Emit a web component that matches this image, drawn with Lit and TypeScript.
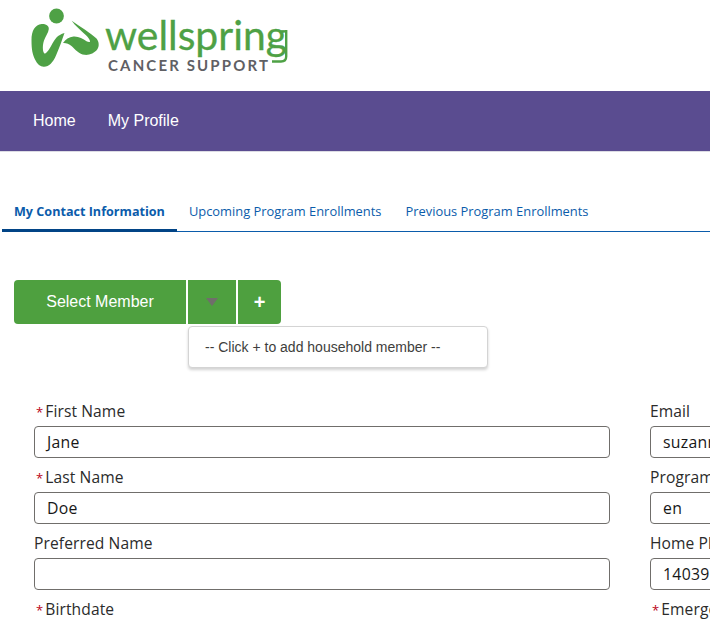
import { LitElement, html, css, svg } from "lit";
import { customElement } from "lit/decorators.js";

const LEFT_FIELDS = [
  { label: "First Name", value: "Jane", required: true },
  { label: "Last Name", value: "Doe", required: true },
  { label: "Preferred Name", value: "", required: false },
  { label: "Birthdate", value: "", required: true },
];

const RIGHT_FIELDS = [
  { label: "Email", value: "suzanne.smith@example.com", required: false },
  { label: "Program Language", value: "en", required: false },
  { label: "Home Phone", value: "14039550100", required: false },
  { label: "Emergency Contact", value: "", required: true },
];

const logo = svg`
  <circle cx="56.5" cy="16" r="7.4" fill="#4ea145"></circle>
  <path fill="#4ea145" d="M41.7 24C35 24.5 31.5 31 31.5 40C31.5 50 32.5 54 35 59.5C37.5 64.5 40.5 67 44 66.8C49 66.5 53 62.5 56 55.5C59.5 47.5 62 40 64.5 33C61 34 58.5 35.5 56.5 37.5C53.5 41 51.5 45.5 49 49.5C47 52.5 45 54.5 44 53C42.5 50.5 42.5 45 44 40.5C45.5 36.5 48.5 32.5 48.8 29C49 25.5 45.5 23.8 41.7 24Z"></path>
  <path fill="#4ea145" d="M71.7 20.7C79 26 91 33 96.5 38.5C99 41.5 99.5 46 97.5 49C94.5 53.5 89 55.3 84.5 54.8C79.5 54.2 75 49.5 71.5 46C69 43.7 66 42.8 63 43C65.5 39.5 69 37 73.5 36.6C78.5 36.2 83 39 86.5 41.2C88 42.1 90 42.4 90 41.4C90 39.8 88 37.3 86 35.3C81 30.5 75 25.5 71.7 20.7Z"></path>
  <text class="logo-word" x="105" y="50" textLength="182" lengthAdjust="spacingAndGlyphs">wellspring</text>
  <path fill="none" stroke="#4ea145" stroke-width="2.4" d="M272 61.5H281C284.5 61.5 286.2 60 286.2 56.5V30"></path>
  <text class="logo-sub" x="108" y="71" textLength="160" lengthAdjust="spacing">CANCER SUPPORT</text>
`;

@customElement("app-root")
export class AppRoot extends LitElement {
  static styles = css`
    :host {
      display: block;
      width: 710px;
      height: 621px;
      overflow: hidden;
      background: #fff;
      font-family: "Open Sans", "Liberation Sans", sans-serif;
      color: #181818;
    }

    .logo-bar {
      height: 91px;
    }

    .logo {
      display: block;
    }

    .logo-word {
      font-family: "Lato", sans-serif;
      font-size: 40px;
      font-weight: 400;
      fill: #4ea145;
      stroke: #4ea145;
      stroke-width: 0.3px;
    }

    .logo-sub {
      font-family: "Lato", sans-serif;
      font-size: 15px;
      font-weight: 700;
      fill: #5f6064;
    }

    .nav {
      height: 60px;
      background: #5a4c90;
      border-bottom: 1px solid #dcdce4;
      box-sizing: content-box;
      display: flex;
      align-items: center;
      gap: 32px;
      padding-left: 33px;
      font-family: "Liberation Sans", sans-serif;
      font-size: 16px;
      color: #fff;
    }

    .tabs {
      margin-top: 43px;
      height: 36px;
      display: flex;
      margin-left: 2px;
      border-bottom: 1px solid #0b5cab;
      font-size: 12.9px;
      color: #0b5cab;
    }

    .tab {
      padding: 0 12px;
      line-height: 33px;
      white-space: nowrap;
    }

    .tab.active {
      font-weight: 700;
      font-size: 12.6px;
      color: #0b5cab;
      box-shadow: inset 0 -3px 0 #014486;
      margin-bottom: -1px;
    }

    .member {
      position: relative;
      margin: 48px 0 0 14px;
      display: flex;
      gap: 2px;
      height: 44px;
      font-family: "Liberation Sans", sans-serif;
    }

    .btn {
      background: #4ea03f;
      color: #fff;
      display: flex;
      align-items: center;
      justify-content: center;
    }

    .btn.select {
      width: 172px;
      font-size: 16px;
      border-radius: 4px 0 0 4px;
    }

    .btn.caret {
      width: 48px;
    }

    .caret-shape {
      width: 0;
      height: 0;
      border-left: 6px solid transparent;
      border-right: 6px solid transparent;
      border-top: 8px solid #706e6b;
    }

    .btn.add {
      width: 43px;
      font-size: 20px;
      font-weight: 700;
      border-radius: 0 4px 4px 0;
    }

    .menu {
      position: absolute;
      left: 174px;
      top: 46px;
      width: 300px;
      height: 42px;
      box-sizing: border-box;
      display: flex;
      align-items: center;
      padding-left: 16px;
      background: #fff;
      border: 1px solid #d4d4d4;
      border-radius: 4px;
      box-shadow: 0 2px 3px rgba(0, 0, 0, 0.18);
      font-size: 14px;
      color: #3e3e3c;
    }

    .form {
      margin: 68px 0 0 34px;
      display: grid;
      grid-template-columns: 576px 576px;
      column-gap: 40px;
    }

    .field {
      height: 66px;
      padding-top: 8px;
      box-sizing: border-box;
    }

    .label {
      height: 26px;
      line-height: 22px;
      font-size: 15.6px;
      letter-spacing: 0.1px;
      color: #2b2b2b;
      white-space: nowrap;
    }

    .label.required {
      padding-left: 2px;
    }

    .star {
      color: #ba0517;
      margin-right: 2px;
      font-size: 13px;
    }

    .input {
      height: 32px;
      box-sizing: border-box;
      border: 1px solid #706e6b;
      border-radius: 4px;
      padding-left: 12px;
      line-height: 30px;
      font-size: 15.8px;
      letter-spacing: 0.3px;
      color: #181818;
      white-space: nowrap;
      overflow: hidden;
    }
  `;

  private renderField(field: { label: string; value: string; required: boolean }) {
    return html`
      <div class="field">
        <div class="label ${field.required ? "required" : ""}">
          ${field.required ? html`<span class="star">*</span>` : ""}${field.label}
        </div>
        <div class="input">${field.value}</div>
      </div>
    `;
  }

  render() {
    return html`
      <div class="logo-bar">
        <svg class="logo" width="320" height="91" viewBox="0 0 320 91">${logo}</svg>
      </div>
      <nav class="nav"><span>Home</span><span>My Profile</span></nav>
      <div class="tabs">
        <div class="tab active">My Contact Information</div>
        <div class="tab">Upcoming Program Enrollments</div>
        <div class="tab">Previous Program Enrollments</div>
      </div>
      <div class="member">
        <div class="btn select">Select Member</div>
        <div class="btn caret"><span class="caret-shape"></span></div>
        <div class="btn add">+</div>
        <div class="menu">-- Click + to add household member --</div>
      </div>
      <div class="form">
        ${LEFT_FIELDS.map((f, i) => html`${this.renderField(f)}${this.renderField(RIGHT_FIELDS[i])}`)}
      </div>
    `;
  }
}
